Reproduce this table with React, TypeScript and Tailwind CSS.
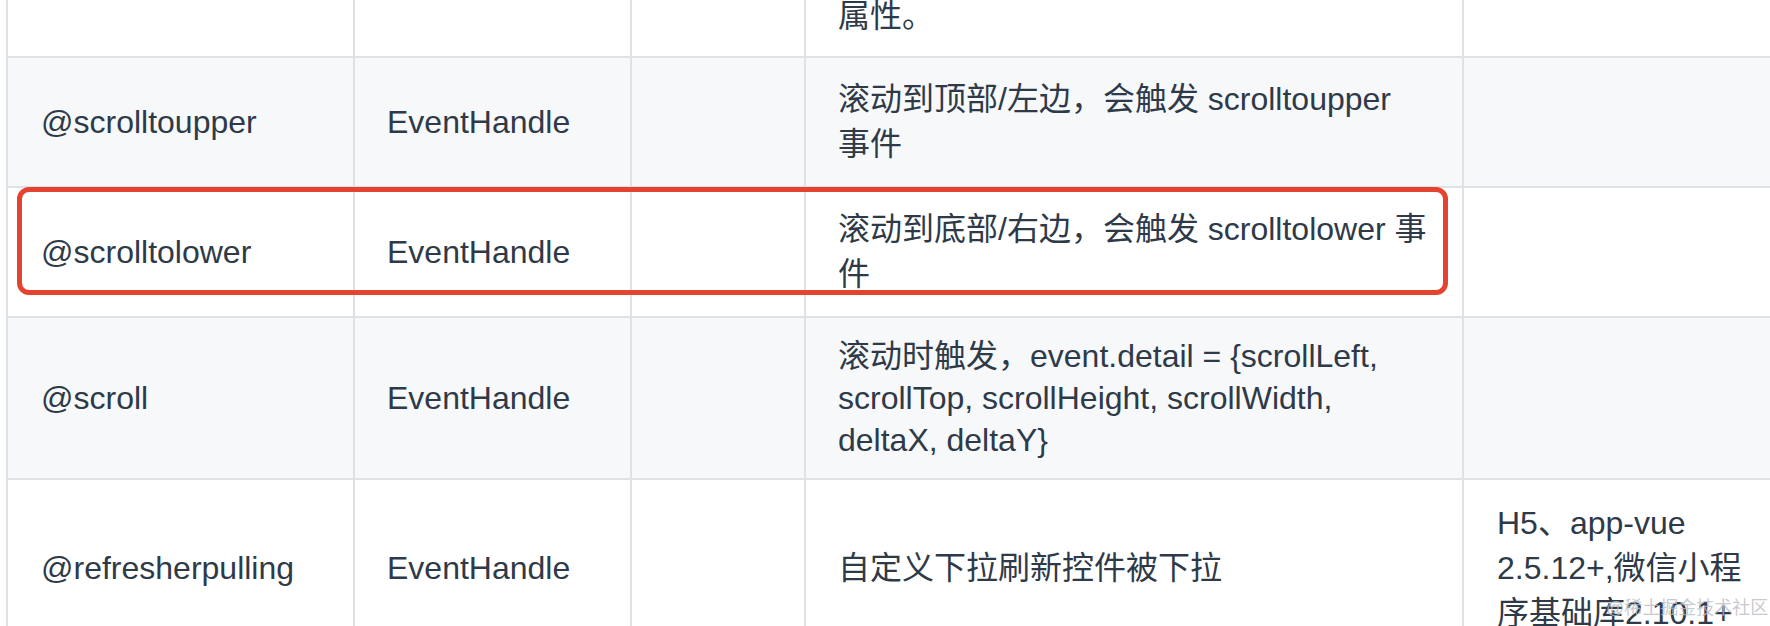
import type { ReactNode } from "react"

type Row = {
  name: string
  type: string
  desc: string[]
  platform?: string[]
  stripe: boolean
  height: string
  lead: string
}

const rows: Row[] = [
  {
    name: "@scrolltoupper",
    type: "EventHandle",
    desc: ["滚动到顶部/左边，会触发 scrolltoupper", "事件"],
    stripe: true,
    height: "h-[130px]",
    lead: "leading-[45px]",
  },
  {
    name: "@scrolltolower",
    type: "EventHandle",
    desc: ["滚动到底部/右边，会触发 scrolltolower 事", "件"],
    stripe: false,
    height: "h-[130px]",
    lead: "leading-[45px]",
  },
  {
    name: "@scroll",
    type: "EventHandle",
    desc: ["滚动时触发，event.detail = {scrollLeft,", "scrollTop, scrollHeight, scrollWidth,", "deltaX, deltaY}"],
    stripe: true,
    height: "h-[162px]",
    lead: "leading-[42px]",
  },
  {
    name: "@refresherpulling",
    type: "EventHandle",
    desc: ["自定义下拉刷新控件被下拉"],
    platform: ["H5、app-vue", "2.5.12+,微信小程", "序基础库2.10.1+"],
    stripe: false,
    height: "h-[178px]",
    lead: "leading-[45px]",
  },
]

const Cell = ({ width, children, className = "" }: { width: string; children?: ReactNode; className?: string }) => (
  <div className={`${width} shrink-0 border-r-2 border-[#dfe2e5] flex pl-[32px] ${className}`}>{children}</div>
)

const Lines = ({ lines, lead }: { lines: string[]; lead: string }) => (
  <div className={lead}>
    {lines.map((l) => (
      <div key={l} className="whitespace-nowrap">
        {l}
      </div>
    ))}
  </div>
)

const App = () => {
  return (
    <div className="relative w-[1770px] h-[626px] overflow-hidden bg-white text-[32px] text-[#2f3a48] font-['Liberation_Sans','Noto_Sans_CJK_SC',sans-serif]">
      <div className="ml-[6px] w-max border-l-2 border-[#dfe2e5]">
        {/* tail of the previous row */}
        <div className="flex h-[58px] border-b-2 border-[#dfe2e5] bg-white">
          <Cell width="w-[347px]" />
          <Cell width="w-[277px]" />
          <Cell width="w-[174px]" />
          <Cell width="w-[658px]" className="items-end pb-[17px] leading-[45px]">
            属性。
          </Cell>
          <Cell width="w-[340px]" />
        </div>
        {rows.map((r) => (
          <div
            key={r.name}
            className={`flex border-b-2 border-[#dfe2e5] ${r.height} ${r.stripe ? "bg-[#f6f8fa]" : "bg-white"}`}
          >
            <Cell width="w-[347px]" className="items-center pl-[33px]">
              {r.name}
            </Cell>
            <Cell width="w-[277px]" className="items-center">
              {r.type}
            </Cell>
            <Cell width="w-[174px]" />
            <Cell width="w-[658px]" className="items-center">
              <Lines lines={r.desc} lead={r.lead} />
            </Cell>
            <Cell width="w-[340px]" className="items-center pl-[33px]">
              {r.platform && <Lines lines={r.platform} lead={r.lead} />}
            </Cell>
          </div>
        ))}
      </div>

      <div className="absolute left-[17px] top-[187px] w-[1431px] h-[108px] rounded-[12px] border-[5px] border-[#e4432f]" />

      <div className="absolute left-[1606px] top-[597px] text-[18px] leading-[22px] text-[#b9bcc2]/80 whitespace-nowrap">
        @稀土掘金技术社区
      </div>
    </div>
  )
}

export default App
